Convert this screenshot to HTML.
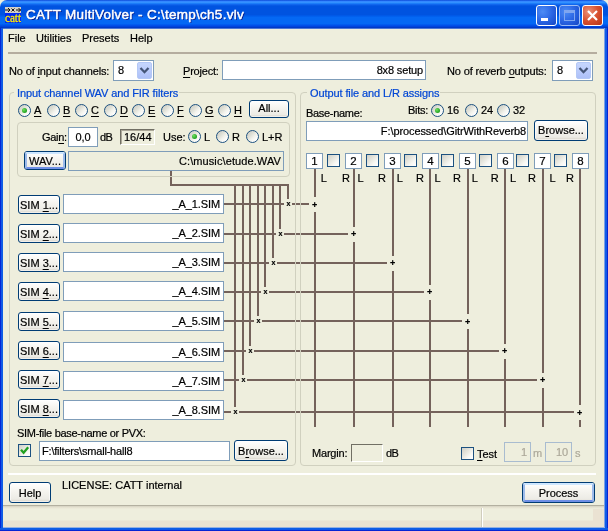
<!DOCTYPE html><html><head><meta charset="utf-8"><title>CATT MultiVolver</title><style>
html,body{margin:0;padding:0;}
body{width:608px;height:531px;overflow:hidden;background:#eeeedd;font-family:"Liberation Sans",sans-serif;font-size:11px;color:#000;}
#w{will-change:transform;position:relative;width:608px;height:531px;overflow:hidden;background:#eeeedd;}
#w *{box-sizing:border-box;}
.a{position:absolute;white-space:pre;line-height:13px;-webkit-text-stroke:0.2px;}
.title{left:0;top:0;width:608px;height:28px;background:linear-gradient(to bottom,#1144cc 0px,#2277ff 1px,#4499ff 2px,#2288ff 3px,#1166ee 4.5px,#0053e0 6px,#0053e0 14.5px,#005cec 16px,#0468f4 17.5px,#0468f4 23.5px,#0055ee 25px,#0044dd 26.5px,#0033bb 28px);border-radius:7px 7px 0 0;}
.ttext{left:25px;top:8px;color:#fff;font:normal 13.5px "Liberation Sans",sans-serif;line-height:16px;text-shadow:1px 1px 0 #0a1883;letter-spacing:0.27px;-webkit-text-stroke:0.45px #fff;}
.bl{background:linear-gradient(to right,#0019cf 0,#0831d9 30%,#166aee 60%,#0855dd 100%);}
.br{background:linear-gradient(to left,#0019cf 0,#0831d9 30%,#166aee 60%,#0855dd 100%);}
.bb{background:linear-gradient(to top,#0019cf 0,#0831d9 30%,#166aee 60%,#0855dd 100%);}
.tb{top:5px;width:21px;height:21px;border:1px solid #fff;border-radius:3px;background:radial-gradient(circle at 30% 30%,#4d8cf5 0,#2b66e4 50%,#1546c4 100%);}
.tbx{background:radial-gradient(circle at 30% 30%,#eb9279 0,#d8502f 50%,#b63417 100%);}
.gb{border:1px solid #d0d0bf;border-radius:4px;}
.leg{color:#0046d5;background:#eeeedd;padding:0 1px 0 3px;margin-left:-2px;}
.tx{border:1px solid #7f9db9;background:#fff;text-align:right;padding:3px 3px 0 0;line-height:13px;letter-spacing:-0.1px;}
.btn{border:1px solid #003c74;border-radius:3px;background:linear-gradient(to bottom,#fff 0,#f6f5f0 40%,#ecebe5 85%,#d6d0c5 100%);text-align:center;line-height:13px;padding-top:3px;box-shadow:inset 0 0 0 1px rgba(255,255,255,.6);}
.btn.def{box-shadow:none;border-color:#003c74;}
.btn.def::before{content:"";position:absolute;left:0;top:0;right:0;bottom:0;border:2px solid;border-color:#cee7ff #9dbbea #6f8fe6 #9dbbea;border-radius:2px;}
.rad{width:13px;height:13px;border-radius:50%;border:1px solid #1c5180;background:linear-gradient(135deg,#c8c8c0 0,#dedfd6 35%,#f4f4ee 60%,#fff 85%);}
.rad.on::after{content:"";position:absolute;left:3px;top:3px;width:5px;height:5px;border-radius:50%;background:radial-gradient(circle at 35% 35%,#6fe05f 0,#21a121 70%);}
.cb{width:13px;height:13px;border:1px solid #1c5180;background:linear-gradient(135deg,#d0d0c8 0,#e6e6de 40%,#f8f8f4 70%,#fff 100%);}
.u{text-decoration:underline;text-underline-offset:2px;text-decoration-thickness:1px;}
.cmb{border:1px solid #7f9db9;background:#fff;padding:3px 0 0 4px;}
.cbtn{position:absolute;right:1px;top:1px;width:15px;height:17px;border-radius:2px;border:1px solid #b4c8f6;background:linear-gradient(to bottom,#c6d6fd 0,#bbccfb 50%,#adc0f8 100%);}
.wv{background:#74625b;width:2px;}
.wh{background:#74625b;height:2px;}
.mk{font-size:7px;line-height:8px;color:#000;font-weight:bold;}
.dis{border-color:#a9bcd0;background:#eeeedd;color:#aca899;padding-right:3px;}
</style></head><body><div id="w">
<div class="a wv" style="left:170px;top:171px;width:2px;height:15px;"></div>
<div class="a wh" style="left:170px;top:184px;width:119px;height:2px;"></div>
<div class="a wv" style="left:287px;top:184px;width:2px;height:15px;"></div>
<div class="a wh" style="left:223px;top:203px;width:61px;height:2px;"></div>
<div class="a mk" style="left:286.5px;top:200px;">x</div>
<div class="a wh" style="left:292px;top:203px;width:17px;height:2px;"></div>
<div class="a mk" style="left:312px;top:201px;font-size:9px;">+</div>
<div class="a wv" style="left:314px;top:168px;width:2px;height:29px;"></div>
<div class="a wv" style="left:314px;top:212px;width:2px;height:215px;"></div>
<div class="a wv" style="left:279px;top:184px;width:2px;height:45px;"></div>
<div class="a wh" style="left:223px;top:233px;width:53px;height:2px;"></div>
<div class="a mk" style="left:278.5px;top:230px;">x</div>
<div class="a wh" style="left:284px;top:233px;width:64px;height:2px;"></div>
<div class="a mk" style="left:351px;top:230px;font-size:9px;">+</div>
<div class="a wv" style="left:353px;top:168px;width:2px;height:59px;"></div>
<div class="a wv" style="left:353px;top:242px;width:2px;height:185px;"></div>
<div class="a wv" style="left:272px;top:184px;width:2px;height:74px;"></div>
<div class="a wh" style="left:223px;top:262px;width:46px;height:2px;"></div>
<div class="a mk" style="left:271.5px;top:259px;">x</div>
<div class="a wh" style="left:277px;top:262px;width:110px;height:2px;"></div>
<div class="a mk" style="left:390px;top:259px;font-size:9px;">+</div>
<div class="a wv" style="left:392px;top:168px;width:2px;height:88px;"></div>
<div class="a wv" style="left:392px;top:271px;width:2px;height:156px;"></div>
<div class="a wv" style="left:264px;top:184px;width:2px;height:103px;"></div>
<div class="a wh" style="left:223px;top:291px;width:38px;height:2px;"></div>
<div class="a mk" style="left:263.5px;top:288px;">x</div>
<div class="a wh" style="left:269px;top:291px;width:155px;height:2px;"></div>
<div class="a mk" style="left:427px;top:288px;font-size:9px;">+</div>
<div class="a wv" style="left:429px;top:168px;width:2px;height:117px;"></div>
<div class="a wv" style="left:429px;top:300px;width:2px;height:127px;"></div>
<div class="a wv" style="left:257px;top:184px;width:2px;height:132px;"></div>
<div class="a wh" style="left:223px;top:320px;width:31px;height:2px;"></div>
<div class="a mk" style="left:256.5px;top:317px;">x</div>
<div class="a wh" style="left:262px;top:320px;width:200px;height:2px;"></div>
<div class="a mk" style="left:465px;top:318px;font-size:9px;">+</div>
<div class="a wv" style="left:467px;top:168px;width:2px;height:146px;"></div>
<div class="a wv" style="left:467px;top:329px;width:2px;height:98px;"></div>
<div class="a wv" style="left:249px;top:184px;width:2px;height:162px;"></div>
<div class="a wh" style="left:223px;top:350px;width:23px;height:2px;"></div>
<div class="a mk" style="left:248.5px;top:347px;">x</div>
<div class="a wh" style="left:254px;top:350px;width:245px;height:2px;"></div>
<div class="a mk" style="left:502px;top:347px;font-size:9px;">+</div>
<div class="a wv" style="left:504px;top:168px;width:2px;height:176px;"></div>
<div class="a wv" style="left:504px;top:359px;width:2px;height:68px;"></div>
<div class="a wv" style="left:242px;top:184px;width:2px;height:191px;"></div>
<div class="a wh" style="left:223px;top:379px;width:16px;height:2px;"></div>
<div class="a mk" style="left:241.5px;top:376px;">x</div>
<div class="a wh" style="left:247px;top:379px;width:290px;height:2px;"></div>
<div class="a mk" style="left:540px;top:376px;font-size:9px;">+</div>
<div class="a wv" style="left:542px;top:168px;width:2px;height:205px;"></div>
<div class="a wv" style="left:542px;top:388px;width:2px;height:39px;"></div>
<div class="a wv" style="left:234px;top:184px;width:2px;height:223px;"></div>
<div class="a wh" style="left:223px;top:411px;width:8px;height:2px;"></div>
<div class="a mk" style="left:233.5px;top:408px;">x</div>
<div class="a wh" style="left:239px;top:411px;width:335px;height:2px;"></div>
<div class="a mk" style="left:577px;top:409px;font-size:9px;">+</div>
<div class="a wv" style="left:579px;top:168px;width:2px;height:237px;"></div>
<div class="a wv" style="left:579px;top:420px;width:2px;height:7px;"></div>
<div class="a title" style="left:0px;top:0px;width:608px;height:28px;"></div>
<div class="a " style="left:0px;top:28px;width:608px;height:1px;background:#4d78d4;"></div>
<svg class="a" style="left:5px;top:7px" width="16" height="16" viewBox="0 0 16 16"><rect width="16" height="16" fill="#0028f0"/><rect width="16" height="6" fill="#d4d0c8"/><path d="M0 3h5M6.5 1.5l3 3M9.5 1.5l-3 3M11 3h5M3 1l2 2-2 2M13.5 1l2 2-2 2" stroke="#000" stroke-width="0.9" fill="none"/><text x="0" y="14.5" font-family="Liberation Serif,serif" font-size="12.5" fill="#ffee00" stroke="#ffee00" stroke-width="0.3" textLength="16" lengthAdjust="spacingAndGlyphs">catt</text></svg>
<div class="a ttext" style="left:26px;top:7px;">CATT MultiVolver - C:\temp\ch5.vlv</div>
<div class="a tb" style="left:536px;top:5px;width:21px;height:21px;"><div class="a" style="left:4px;top:12px;width:7px;height:3px;background:#fff"></div></div>
<div class="a tb" style="left:559px;top:5px;width:21px;height:21px;border-color:#9dbcf5;"><div class="a" style="left:4px;top:4px;width:11px;height:11px;border:1px solid #7fa6f0;border-top-width:3px;"></div></div>
<div class="a tb tbx" style="left:582px;top:5px;width:21px;height:21px;"><svg class="a" style="left:0;top:0" width="19" height="19"><path d="M5 5l9 9M14 5l-9 9" stroke="#fff" stroke-width="2.2"/></svg></div>
<div class="a bl" style="left:0px;top:28px;width:3px;height:503px;"></div>
<div class="a br" style="left:605px;top:28px;width:3px;height:503px;"></div>
<div class="a bb" style="left:0px;top:528px;width:608px;height:3px;"></div>
<div class="a " style="left:8px;top:32px;">File</div>
<div class="a " style="left:36px;top:32px;">Utilities</div>
<div class="a " style="left:82px;top:32px;">Presets</div>
<div class="a " style="left:130px;top:32px;">Help</div>
<div class="a " style="left:8px;top:52px;width:589px;height:2px;background:#b5ad9f;"></div>
<div class="a " style="left:9px;top:65px;letter-spacing:-0.15px">No of <span class="u">i</span>nput channels:</div>
<div class="a cmb" style="left:113px;top:60px;width:41px;height:21px;">8<div class="cbtn"><svg width="14" height="15" style="position:absolute;left:0;top:0"><path d="M2.5 5l4 4.2 4-4.2" stroke="#445577" stroke-width="2.3" fill="none"/></svg></div></div>
<div class="a " style="left:183px;top:65px;letter-spacing:-0.2px"><span class="u">P</span>roject:</div>
<div class="a tx" style="left:222px;top:60px;width:204px;height:20px;padding-right:2px;letter-spacing:-0.15px">8x8 setup</div>
<div class="a " style="left:447px;top:65px;letter-spacing:-0.15px">No of reverb <span class="u">o</span>utputs:</div>
<div class="a cmb" style="left:552px;top:60px;width:41px;height:21px;">8<div class="cbtn"><svg width="14" height="15" style="position:absolute;left:0;top:0"><path d="M2.5 5l4 4.2 4-4.2" stroke="#445577" stroke-width="2.3" fill="none"/></svg></div></div>
<div class="a gb" style="left:9px;top:92px;width:287px;height:374px;"></div>
<div class="a leg" style="left:16px;top:87px;letter-spacing:-0.1px">Input channel WAV and FIR filters</div>
<div class="a gb" style="left:300px;top:92px;width:296px;height:374px;"></div>
<div class="a leg" style="left:309px;top:87px;letter-spacing:-0.1px">Output file and L/R assigns</div>
<div class="a rad on" style="left:18px;top:104px;width:13px;height:13px;"></div>
<div class="a u" style="left:34px;top:104px;">A</div>
<div class="a rad" style="left:47px;top:104px;width:13px;height:13px;"></div>
<div class="a u" style="left:63px;top:104px;">B</div>
<div class="a rad" style="left:75px;top:104px;width:13px;height:13px;"></div>
<div class="a u" style="left:91px;top:104px;">C</div>
<div class="a rad" style="left:104px;top:104px;width:13px;height:13px;"></div>
<div class="a u" style="left:120px;top:104px;">D</div>
<div class="a rad" style="left:132px;top:104px;width:13px;height:13px;"></div>
<div class="a u" style="left:148px;top:104px;">E</div>
<div class="a rad" style="left:161px;top:104px;width:13px;height:13px;"></div>
<div class="a u" style="left:177px;top:104px;">F</div>
<div class="a rad" style="left:189px;top:104px;width:13px;height:13px;"></div>
<div class="a u" style="left:205px;top:104px;">G</div>
<div class="a rad" style="left:218px;top:104px;width:13px;height:13px;"></div>
<div class="a u" style="left:234px;top:104px;">H</div>
<div class="a btn" style="left:249px;top:100px;width:40px;height:18px;padding-top:1px">All...</div>
<div class="a gb" style="left:17px;top:122px;width:273px;height:55px;"></div>
<div class="a " style="left:42px;top:131px;letter-spacing:-0.3px">Gai<span class="u">n</span>:</div>
<div class="a tx" style="left:68px;top:127px;width:30px;height:20px;padding-right:0;text-align:center;">0,0</div>
<div class="a " style="left:100px;top:131px;letter-spacing:-0.6px">dB</div>
<div class="a " style="left:120px;top:129px;width:35px;height:16px;border:1px solid #fff;border-top-color:#716f64;border-left-color:#716f64;box-shadow:inset 1px 1px 0 #aca899;padding:1px 0 0 3px;">16/44</div>
<div class="a " style="left:163px;top:131px;">Use:</div>
<div class="a rad on" style="left:188px;top:130px;width:13px;height:13px;"></div>
<div class="a " style="left:204px;top:131px;">L</div>
<div class="a rad" style="left:216px;top:130px;width:13px;height:13px;"></div>
<div class="a " style="left:232px;top:131px;">R</div>
<div class="a rad" style="left:246px;top:130px;width:13px;height:13px;"></div>
<div class="a " style="left:262px;top:131px;">L+R</div>
<div class="a btn def" style="left:24px;top:151px;width:42px;height:19px;padding-top:3px"><span class="u">W</span>AV...</div>
<div class="a tx" style="left:68px;top:151px;width:216px;height:20px;background:#eeeedd;letter-spacing:0.1px;padding-right:2px">C:\music\etude.WAV</div>
<div class="a btn" style="left:18px;top:195px;width:42px;height:19px;">SIM <span class="u">1</span>...</div>
<div class="a tx" style="left:63px;top:194px;width:161px;height:20px;">_A_1.SIM</div>
<div class="a btn" style="left:18px;top:224px;width:42px;height:19px;">SIM <span class="u">2</span>...</div>
<div class="a tx" style="left:63px;top:223px;width:161px;height:20px;">_A_2.SIM</div>
<div class="a btn" style="left:18px;top:253px;width:42px;height:19px;">SIM <span class="u">3</span>...</div>
<div class="a tx" style="left:63px;top:252px;width:161px;height:20px;">_A_3.SIM</div>
<div class="a btn" style="left:18px;top:282px;width:42px;height:19px;">SIM <span class="u">4</span>...</div>
<div class="a tx" style="left:63px;top:281px;width:161px;height:20px;">_A_4.SIM</div>
<div class="a btn" style="left:18px;top:312px;width:42px;height:19px;">SIM <span class="u">5</span>...</div>
<div class="a tx" style="left:63px;top:311px;width:161px;height:20px;">_A_5.SIM</div>
<div class="a btn" style="left:18px;top:341px;width:42px;height:19px;">SIM <span class="u">6</span>...</div>
<div class="a tx" style="left:63px;top:342px;width:161px;height:20px;">_A_6.SIM</div>
<div class="a btn" style="left:18px;top:370px;width:42px;height:19px;">SIM <span class="u">7</span>...</div>
<div class="a tx" style="left:63px;top:371px;width:161px;height:20px;">_A_7.SIM</div>
<div class="a btn" style="left:18px;top:399px;width:42px;height:19px;">SIM <span class="u">8</span>...</div>
<div class="a tx" style="left:63px;top:400px;width:161px;height:20px;">_A_8.SIM</div>
<div class="a " style="left:17px;top:427px;letter-spacing:-0.3px">SIM-file base-name or PVX:</div>
<div class="a cb" style="left:18px;top:444px;width:13px;height:13px;"><svg width="11" height="11" style="position:absolute;left:0;top:0"><path d="M2 4.8l2.6 3 4.6-5.6" stroke="#21a121" stroke-width="2.3" fill="none"/></svg></div>
<div class="a tx" style="left:39px;top:441px;width:191px;height:20px;text-align:left;padding-left:2px;letter-spacing:-0.2px">F:\filters\small-hall8</div>
<div class="a btn" style="left:234px;top:440px;width:54px;height:21px;padding-top:4px">B<span class="u">r</span>owse...</div>
<div class="a " style="left:306px;top:107px;letter-spacing:-0.3px">Base-name:</div>
<div class="a " style="left:408px;top:104px;letter-spacing:-0.3px">Bits:</div>
<div class="a rad on" style="left:431px;top:104px;width:13px;height:13px;"></div>
<div class="a " style="left:447px;top:104px;">16</div>
<div class="a rad" style="left:465px;top:104px;width:13px;height:13px;"></div>
<div class="a " style="left:481px;top:104px;">24</div>
<div class="a rad" style="left:497px;top:104px;width:13px;height:13px;"></div>
<div class="a " style="left:513px;top:104px;">32</div>
<div class="a tx" style="left:306px;top:121px;width:222px;height:20px;padding-right:1px">F:\processed\GitrWithReverb8</div>
<div class="a btn" style="left:534px;top:120px;width:54px;height:21px;padding-top:3px">B<span class="u">r</span>owse...</div>
<div class="a " style="left:306px;top:153px;width:17px;height:16px;border:1px solid #7f9db9;background:#fff;text-align:center;line-height:15px;font-size:11.5px;">1</div>
<div class="a " style="left:345px;top:153px;width:17px;height:16px;border:1px solid #7f9db9;background:#fff;text-align:center;line-height:15px;font-size:11.5px;">2</div>
<div class="a " style="left:384px;top:153px;width:17px;height:16px;border:1px solid #7f9db9;background:#fff;text-align:center;line-height:15px;font-size:11.5px;">3</div>
<div class="a " style="left:422px;top:153px;width:17px;height:16px;border:1px solid #7f9db9;background:#fff;text-align:center;line-height:15px;font-size:11.5px;">4</div>
<div class="a " style="left:459px;top:153px;width:17px;height:16px;border:1px solid #7f9db9;background:#fff;text-align:center;line-height:15px;font-size:11.5px;">5</div>
<div class="a " style="left:497px;top:153px;width:17px;height:16px;border:1px solid #7f9db9;background:#fff;text-align:center;line-height:15px;font-size:11.5px;">6</div>
<div class="a " style="left:534px;top:153px;width:17px;height:16px;border:1px solid #7f9db9;background:#fff;text-align:center;line-height:15px;font-size:11.5px;">7</div>
<div class="a " style="left:572px;top:153px;width:17px;height:16px;border:1px solid #7f9db9;background:#fff;text-align:center;line-height:15px;font-size:11.5px;">8</div>
<div class="a cb" style="left:327px;top:154px;width:13px;height:13px;"></div>
<div class="a cb" style="left:366px;top:154px;width:13px;height:13px;"></div>
<div class="a cb" style="left:404px;top:154px;width:13px;height:13px;"></div>
<div class="a cb" style="left:441px;top:154px;width:13px;height:13px;"></div>
<div class="a cb" style="left:479px;top:154px;width:13px;height:13px;"></div>
<div class="a cb" style="left:516px;top:154px;width:13px;height:13px;"></div>
<div class="a cb" style="left:554px;top:154px;width:13px;height:13px;"></div>
<div class="a " style="left:320.75px;top:172px;">L</div>
<div class="a " style="left:357.5px;top:172px;">L</div>
<div class="a " style="left:396.75px;top:172px;">L</div>
<div class="a " style="left:434.5px;top:172px;">L</div>
<div class="a " style="left:471.75px;top:172px;">L</div>
<div class="a " style="left:510px;top:172px;">L</div>
<div class="a " style="left:549.6px;top:172px;">L</div>
<div class="a " style="left:341.9px;top:172px;">R</div>
<div class="a " style="left:377.9px;top:172px;">R</div>
<div class="a " style="left:416px;top:172px;">R</div>
<div class="a " style="left:453px;top:172px;">R</div>
<div class="a " style="left:490.75px;top:172px;">R</div>
<div class="a " style="left:528px;top:172px;">R</div>
<div class="a " style="left:565.9px;top:172px;">R</div>
<div class="a " style="left:312px;top:447px;letter-spacing:-0.2px">Margin:</div>
<div class="a " style="left:351px;top:444px;width:32px;height:18px;border:1px solid #fff;border-top-color:#716f64;border-left-color:#716f64;"></div>
<div class="a " style="left:386px;top:447px;letter-spacing:-0.6px">dB</div>
<div class="a cb" style="left:461px;top:447px;width:13px;height:13px;"></div>
<div class="a " style="left:477px;top:448px;"><span class="u">T</span>est</div>
<div class="a tx dis" style="left:504px;top:442px;width:27px;height:20px;">1</div>
<div class="a " style="left:533px;top:447px;color:#aca899">m</div>
<div class="a tx dis" style="left:545px;top:442px;width:27px;height:20px;">10</div>
<div class="a " style="left:575px;top:447px;color:#aca899">s</div>
<div class="a " style="left:8px;top:473px;width:588px;height:2px;background:#fff;"></div>
<div class="a btn" style="left:9px;top:482px;width:42px;height:21px;padding-top:4px">Help</div>
<div class="a " style="left:62px;top:479px;">LICENSE: CATT internal</div>
<div class="a btn def" style="left:522px;top:482px;width:73px;height:21px;padding-top:4px">Process</div>
<div class="a " style="left:3px;top:505px;width:602px;height:23px;border-top:1px solid #b3b0a0;background:linear-gradient(to bottom,#d2cfbf 0,#e2dfce 1px,#e9e6d5 2px,#eeeedd 3px,#eeeedd 14px,#eae2d2 15px,#eae2d2 22px);"></div>
<div class="a " style="left:593px;top:509px;width:12px;height:19px;background:#eae2d2;"></div>
<div class="a " style="left:481px;top:508px;width:2px;height:19px;border-left:1px solid #d0cdbd;border-right:1px solid #fff;"></div>
<div class="a " style="left:604px;top:28px;width:1px;height:500px;background:#7d9fe6;"></div>
<div class="a " style="left:3px;top:527px;width:602px;height:1px;background:#96b0e2;"></div>
</div></body></html>
